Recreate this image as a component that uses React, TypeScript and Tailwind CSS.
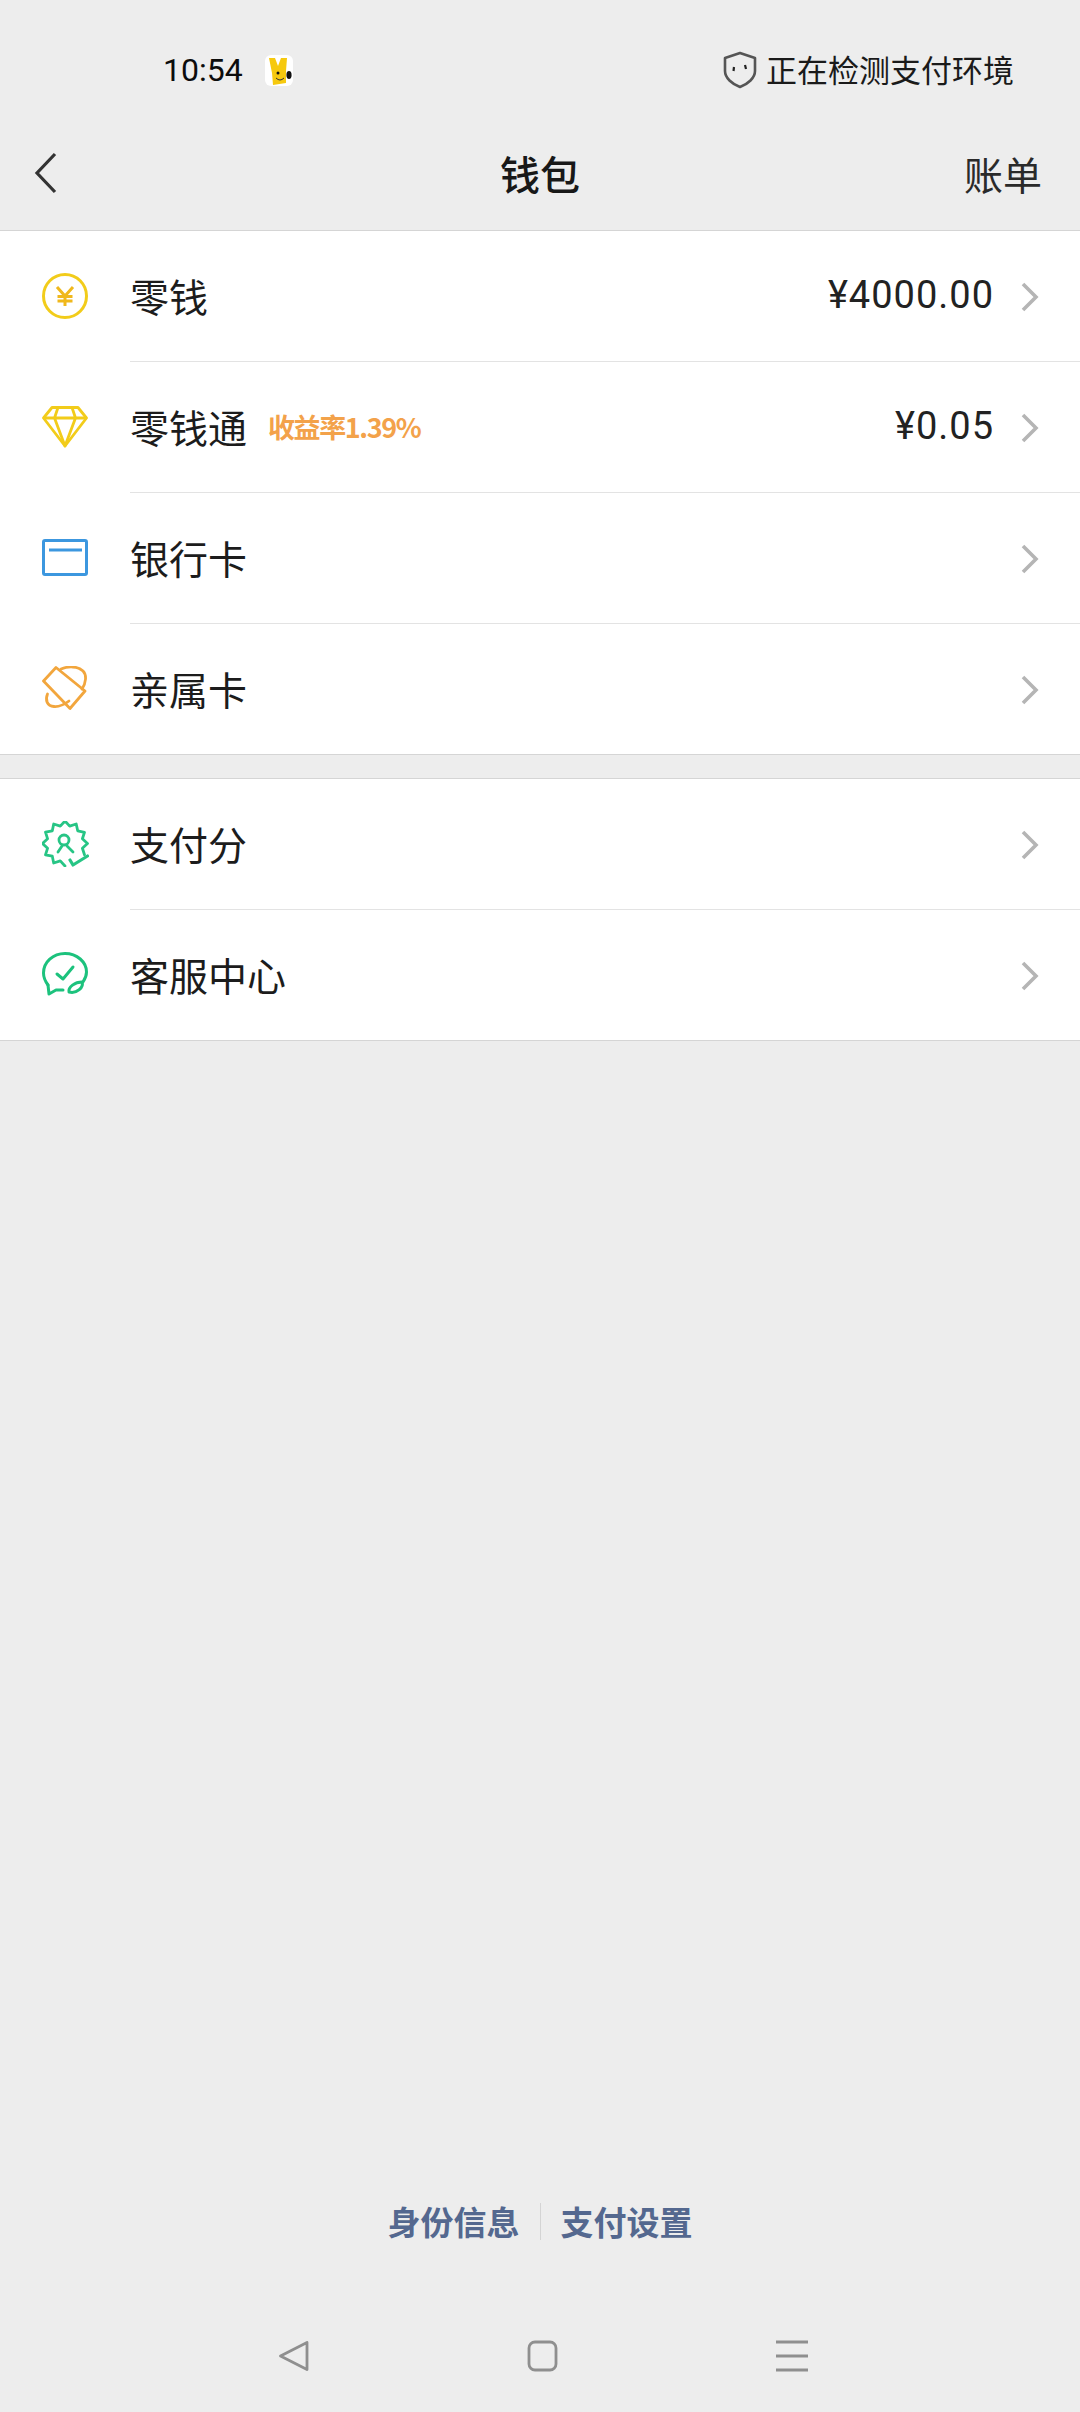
const cjk = "font-['Noto_Sans_CJK_SC','Noto_Sans',sans-serif]";

function Chevron() {
  return (
    <svg width="18" height="30" viewBox="0 0 18 30" fill="none" className="mt-[3px] shrink-0">
      <path d="M2 2 L15 15 L2 28" stroke="#b5b5b5" strokeWidth="3.6" />
    </svg>
  );
}

function Yen() {
  return (
    <svg width="46" height="46" viewBox="0 0 46 46" fill="none">
      <circle cx="23" cy="23" r="21.5" stroke="#f2cc1a" strokeWidth="3" />
      <path d="M15 14 L23 23 L31 14 M23 23 V33 M15.5 23.5 H30.5 M15.5 28 H30.5" stroke="#f0b81c" strokeWidth="3" />
    </svg>
  );
}

function Diamond() {
  return (
    <svg width="46" height="42" viewBox="0 0 46 42" fill="none" stroke="#f2cc1a" strokeWidth="2.8" strokeLinejoin="round">
      <path d="M10 1.5 H36 L44.5 12 L23 40 L1.5 12 Z" />
      <path d="M1.5 12 H44.5 M16 1.5 L12.5 12 L23 40 L33.5 12 L30 1.5" />
    </svg>
  );
}

function Card() {
  return (
    <svg width="46" height="37" viewBox="0 0 46 37" fill="none" stroke="#3c97df" strokeWidth="3">
      <rect x="1.5" y="1.5" width="43" height="34" rx="1.5" />
      <path d="M7 11 H40" />
    </svg>
  );
}

function FamilyCard() {
  return (
    <svg width="46" height="44" viewBox="0 0 46 44" fill="none" stroke="#f2a63d" strokeWidth="2.8" strokeLinecap="round" strokeLinejoin="round">
      <path d="M14 1.5 L43 25 L28 42.5 L1.5 15 Z" />
      <path d="M19 3 C26 0 36 0 41 5 C45 9 44 17 40 23" />
      <path d="M5.5 28 C3 34 5 40 12 40.5 C18 41 23 38 27 35" />
    </svg>
  );
}

function PayScore() {
  const points: string[] = [];
  for (let i = 0; i <= 20; i++) {
    const angle = ((180 + i * 15) * Math.PI) / 180;
    const r = i % 2 === 0 ? 22.5 : 18;
    points.push(`${(23 + r * Math.sin(angle)).toFixed(1)} ${(22.5 - r * Math.cos(angle)).toFixed(1)}`);
  }
  return (
    <svg width="47" height="46" viewBox="0 0 47 46" fill="none" stroke="#27c585" strokeWidth="2.8" strokeLinejoin="round" strokeLinecap="round">
      <path d={`M${points.join(" L")}`} />
      <circle cx="22" cy="19" r="5" />
      <path d="M16 31 L20 25 M31 31 L25 25" />
      <path d="M28 39 L31 44 L45.5 35" strokeWidth="3.2" />
    </svg>
  );
}

function Service() {
  return (
    <svg width="46" height="44" viewBox="0 0 46 44" fill="none" stroke="#1cc27d" strokeWidth="3" strokeLinecap="round" strokeLinejoin="round">
      <path d="M6 33 C3 29 1.5 25 1.5 21 C1.5 10 11 1.5 23 1.5 C35 1.5 44.5 10 44.5 20 C44.5 24 43 27 41 30" />
      <path d="M6 33 L7 42 L14 38 L21 38" />
      <path d="M15 22 L21 27 L31 15" />
      <path d="M27 40 C26 35 33 30 40 30 C42 35 35 42 27 40 Z" />
    </svg>
  );
}

function Row({ icon, label, extra, value, divider = true }: { icon: React.ReactNode; label: string; extra?: string; value?: string; divider?: boolean }) {
  return (
    <div className={`flex bg-white ${divider ? "h-[131px]" : "h-[130px]"}`}>
      <div className="flex w-[130px] shrink-0 items-center pb-[2px] pl-[41px]">
        <div className="flex w-[48px] justify-center">{icon}</div>
      </div>
      <div className={`flex flex-1 items-center pb-[2px] pr-[41px] ${divider ? "border-b border-[#e3e3e3]" : ""}`}>
        <span className={`${cjk} text-[39px] leading-none text-[#1c1c1c]`}>{label}</span>
        {extra && <span className={`${cjk} ml-[21px] mt-[1px] text-[27px] leading-none font-semibold tracking-[-1.4px] text-[#f3a24a]`}>{extra}</span>}
        <div className="flex-1" />
        {value && <span className="mr-[27px] font-['Roboto',sans-serif] text-[38px] leading-none tracking-[1px] text-[#222222]">{value}</span>}
        <Chevron />
      </div>
    </div>
  );
}

export default function App() {
  return (
    <div className="flex h-[2412px] w-[1080px] flex-col bg-[#ededed]">
      <div className="flex h-[231px] flex-col border-b border-[#d5d5d5]">
        <div className="flex h-[120px] items-center justify-between pl-[163px] pr-[66px] pt-[20px]">
          <div className="flex items-center gap-[22px]">
            <span className="font-['Roboto',sans-serif] text-[32px] leading-none font-normal text-[#0c0c0c]">10:54</span>
            <div className="relative flex h-[31px] w-[28px] items-center justify-center rounded-[6px] bg-white">
              <svg width="26" height="30" viewBox="0 0 26 30">
                <path d="M3 3 L9 3 L12 11 L15 3 L21 3 L20 16 L20 28 L7 30 L6 18 Z" fill="#f6c90e" />
                <ellipse cx="23" cy="20" rx="2.6" ry="4" fill="#111" />
                <circle cx="12" cy="18" r="1.5" fill="#111" />
                <path d="M10 23 Q14 27 18 23" stroke="#333" strokeWidth="1" fill="none" />
              </svg>
            </div>
          </div>
          <div className="flex items-center gap-[9px]">
            <svg width="34" height="38" viewBox="0 0 34 38" fill="none">
              <path d="M17 2 L32 7 V20 C32 27 25 33 17 36 C9 33 2 27 2 20 V7 Z" stroke="#555" strokeWidth="2.6" strokeLinejoin="round" />
              <path d="M11 16 L10.5 20 M22 14 L23 18" stroke="#222" strokeWidth="2.2" />
            </svg>
            <span className={`${cjk} mb-[4px] text-[31px] leading-none text-[#1a1a1a]`}>正在检测支付环境</span>
          </div>
        </div>
        <div className="grid h-[110px] grid-cols-[1fr_auto_1fr] items-center pb-[4px] pl-[38px] pr-[38px]">
          <svg width="24" height="42" viewBox="0 0 24 42" fill="none" className="-ml-[4px]">
            <path d="M21 2 L3 21 L21 40" stroke="#333" strokeWidth="3.2" />
          </svg>
          <span className={`${cjk} text-[40px] leading-none font-medium text-[#181818]`}>钱包</span>
          <span className={`${cjk} justify-self-end text-[39px] leading-none text-[#2a2a2a]`}>账单</span>
        </div>
      </div>

      <div className="border-b border-[#d5d5d5]">
        <Row icon={<Yen />} label="零钱" value="¥4000.00" />
        <Row icon={<Diamond />} label="零钱通" extra="收益率1.39%" value="¥0.05" />
        <Row icon={<Card />} label="银行卡" />
        <Row icon={<FamilyCard />} label="亲属卡" divider={false} />
      </div>

      <div className="mt-[23px] border-y border-[#d5d5d5]">
        <Row icon={<PayScore />} label="支付分" />
        <Row icon={<Service />} label="客服中心" divider={false} />
      </div>

      <div className="flex-1" />

      <div className="flex items-center justify-center">
        <span className={`${cjk} text-[33px] leading-none font-semibold text-[#54688f]`}>身份信息</span>
        <div className="mx-[20px] h-[37px] w-px bg-[#d4d4d4]" />
        <span className={`${cjk} text-[33px] leading-none font-semibold text-[#54688f]`}>支付设置</span>
      </div>

      <div className="mt-[100px] flex h-[72px] items-start justify-center gap-[217px] pl-[6px]">
        <svg width="32" height="32" viewBox="0 0 32 32" fill="none">
          <path d="M29 2.5 L2.5 16 L29 29.5 Z" stroke="#8f8f8f" strokeWidth="2.8" strokeLinejoin="round" />
        </svg>
        <svg width="31" height="32" viewBox="0 0 31 32" fill="none">
          <rect x="2" y="2" width="27" height="28" rx="6" stroke="#8f8f8f" strokeWidth="2.8" />
        </svg>
        <svg width="34" height="32" viewBox="0 0 34 32" fill="none">
          <path d="M1 2 H33 M1 16 H33 M1 30 H33" stroke="#8f8f8f" strokeWidth="3" />
        </svg>
      </div>
    </div>
  );
}
